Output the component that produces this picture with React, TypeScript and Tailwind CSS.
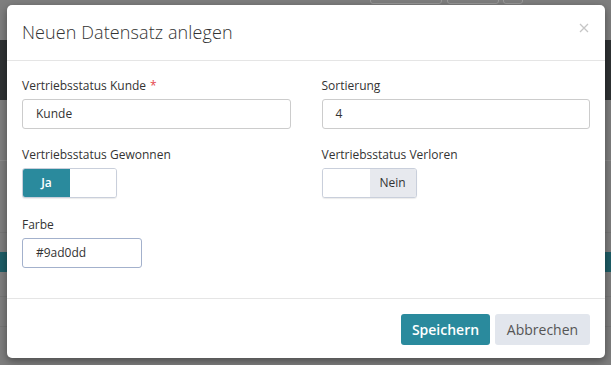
import React from "react";

const font = { fontFamily: '"Open Sans", "Noto Sans", sans-serif' };

function Label({ children, required }: { children: React.ReactNode; required?: boolean }) {
  return (
    <div className="text-[12px] leading-[18px] text-[#333] mb-[4px]">
      {children}
      {required && <span className="text-[#e5484d] ml-[4px]">*</span>}
    </div>
  );
}

function Toggle({ on }: { on: boolean }) {
  return (
    <div className="flex w-[95px] h-[30px] rounded-[3px] border border-[#c9cfdb] overflow-hidden bg-white shadow-[0_1px_1px_rgba(0,0,0,0.08)]">
      {on ? (
        <>
          <div className="w-[47px] bg-[#2a8a9d] text-white font-semibold text-[12px] flex items-center justify-center">Ja</div>
          <div className="flex-1 bg-white" />
        </>
      ) : (
        <>
          <div className="w-[47px] bg-white" />
          <div className="flex-1 bg-[#e7e9ee] text-[#333] text-[12px] flex items-center justify-center">Nein</div>
        </>
      )}
    </div>
  );
}

export default function App() {
  return (
    <div className="relative w-[611px] h-[365px] overflow-hidden bg-[#7e7e7e]" style={font}>
      {/* dimmed page behind */}
      <div className="flex flex-col h-full">
        <div className="h-[40px] relative">
          <div className="absolute left-[370px] top-[-6px] w-[72px] h-[10px] border border-[#9a9a9a] rounded-[3px]" />
          <div className="absolute left-[447px] top-[-6px] w-[52px] h-[10px] border border-[#9a9a9a] rounded-[3px]" />
          <div className="absolute left-[503px] top-[-6px] w-[20px] h-[10px] border border-[#9a9a9a] rounded-[3px]" />
        </div>
        <div className="h-[60px] bg-[#2f3234]" />
        <div className="h-[61px] border-b border-[#8a8a8a]" />
        <div className="h-[72px] border-b border-[#767676]" />
        <div className="h-[19px]" />
        <div className="h-[20px] bg-[#1e5d66]" />
        <div className="h-[25px] border-b border-[#767676]" />
        <div className="h-[30px] border-b border-[#767676]" />
      </div>

      {/* modal */}
      <div className="absolute left-[7px] top-[5px] w-[598px] h-[353px] bg-white rounded-[5px] shadow-[0_3px_9px_rgba(0,0,0,0.4)] flex flex-col">
        <div className="h-[56px] border-b border-[#e5e5e5] px-[15px] flex items-center justify-between">
          <div className="text-[18px] font-light text-[#333] tracking-[0.1px]">Neuen Datensatz anlegen</div>
          <svg width="10" height="10" viewBox="0 0 10 10" className="self-start mt-[18px] mr-[1px]">
            <path d="M1 1 L9 9 M9 1 L1 9" stroke="#c6c6c6" strokeWidth="1.3" fill="none" />
          </svg>
        </div>
        <div className="px-[15px] pt-[16px] pb-[30px]">
          <div className="grid grid-cols-2 gap-x-[31px]">
            <div>
              <Label required>Vertriebsstatus Kunde</Label>
              <div className="h-[30px] border border-[#ccc] rounded-[3px] px-[13px] flex items-center text-[12px] text-[#333]">Kunde</div>
            </div>
            <div>
              <Label>Sortierung</Label>
              <div className="h-[30px] border border-[#ccc] rounded-[3px] px-[13px] flex items-center text-[12px] text-[#333]">4</div>
            </div>
            <div className="mt-[17px]">
              <Label>Vertriebsstatus Gewonnen</Label>
              <Toggle on />
            </div>
            <div className="mt-[17px]">
              <Label>Vertriebsstatus Verloren</Label>
              <Toggle on={false} />
            </div>
            <div className="mt-[18px]">
              <Label>Farbe</Label>
              <div className="w-[120px] h-[30px] border border-[#a3b1cc] rounded-[3px] px-[13px] flex items-center text-[12px] text-[#333]">#9ad0dd</div>
            </div>
          </div>
        </div>
        <div className="border-t border-[#e5e5e5] flex-1 flex items-start justify-end px-[15px] pt-[15px] gap-[5px]">
          <div className="w-[89px] h-[31px] rounded-[3px] bg-[#2a8a9d] text-white text-[14px] font-semibold flex items-center justify-center">Speichern</div>
          <div className="w-[95px] h-[31px] rounded-[3px] bg-[#e2e6ed] text-[#555] text-[14px] flex items-center justify-center">Abbrechen</div>
        </div>
      </div>
    </div>
  );
}
